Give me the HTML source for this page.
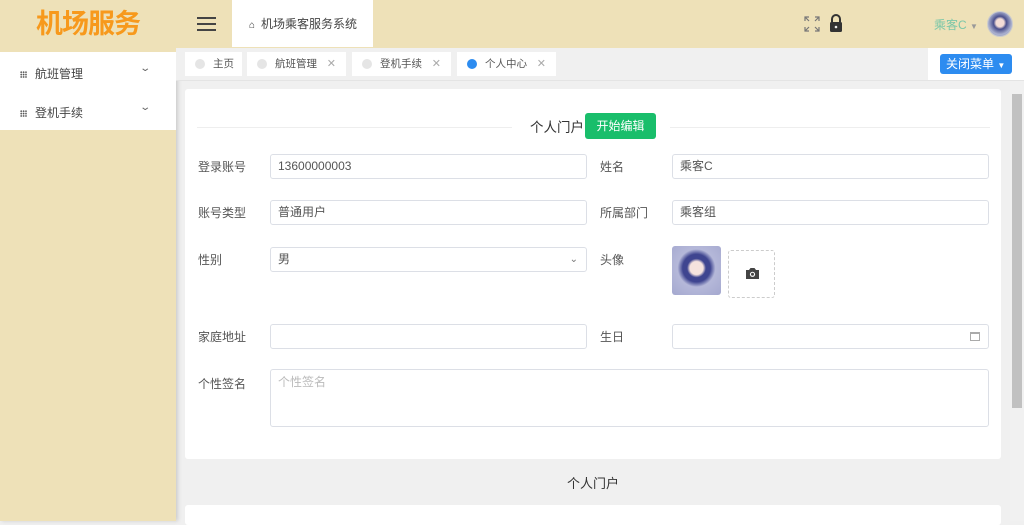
<!DOCTYPE html><html><head><meta charset="utf-8"><style>
*{box-sizing:border-box;margin:0;padding:0}
body{width:1024px;height:521px;overflow:hidden;background:#f0f0f0;font-family:"Liberation Sans","Noto Sans CJK SC",sans-serif;font-size:12px;color:#555;position:relative}
.a{position:absolute}
.side{left:0;top:0;width:176px;height:521px;background:#eee1b8;box-shadow:2px 0 4px rgba(0,0,0,.15)}
.logo{left:0;top:0;width:176px;height:50px;text-align:center;line-height:48px;font-size:27px;font-weight:bold;color:#f7991c;letter-spacing:-1px}
.menu{left:0;top:52px;width:176px;height:78px;background:#fff}
.mi{position:absolute;left:20px;font-size:12px;color:#444}
.grid{display:inline-block;width:7px;height:7px;background:radial-gradient(circle,#555 0.9px,transparent 1px) 0 0/2.4px 2.4px;margin-right:8px;vertical-align:0}
.chev{position:absolute;left:141px;font-size:10px;color:#666;transform:scaleX(1.4)}
.head{left:176px;top:0;width:848px;height:48px;background:#eee1b8}
.tabbar{left:176px;top:48px;width:848px;height:33px;background:#f0f0f0;border-bottom:1px solid #e4e4e4}
.tab{position:absolute;top:52px;height:24px;background:#fff;font-size:10.5px;color:#555;line-height:24px}
.dot{position:absolute;left:10px;top:7px;width:10px;height:10px;border-radius:50%;background:#e5e5e5}
.x{position:absolute;right:10px;color:#aaa;font-size:11px}
.inp{position:absolute;height:25px;border:1px solid #dcdfe6;border-radius:3px;background:#fff;padding-left:7px;line-height:23px;color:#555;font-size:12px}
.lb{position:absolute;font-size:12px;color:#555}
</style></head><body>
<div class="a side"></div>
<div class="a logo">机场服务</div>
<div class="a menu">
<div class="mi" style="top:13px"><span class="grid"></span>航班管理</div><div class="chev" style="top:11px">⌄</div>
<div class="mi" style="top:52px"><span class="grid"></span>登机手续</div><div class="chev" style="top:50px">⌄</div>
</div>
<div class="a head"></div>
<div class="a" style="left:197px;top:17px;width:19px;height:2px;background:#444;box-shadow:0 6px 0 #444,0 12px 0 #444"></div>
<div class="a" style="left:232px;top:0;width:141px;height:47px;background:#fff;font-size:12px;color:#444;line-height:48px;padding-left:17px"><span style="font-size:10px;color:#333;margin-right:6px">⌂</span>机场乘客服务系统</div>
<svg class="a" style="left:804px;top:16px" width="16" height="16" viewBox="0 0 16 16" fill="none" stroke="#777" stroke-width="1.2"><path d="M1 5V1h4M1 1l4 4M11 1h4v4M15 1l-4 4M1 11v4h4M1 15l4-4M15 11v4h-4M15 15l-4-4"/></svg>
<svg class="a" style="left:829px;top:14px" width="14" height="18" viewBox="0 0 14 18"><path d="M3 8V5a4 4 0 0 1 8 0v3" fill="none" stroke="#333" stroke-width="2"/><rect x="1" y="8" width="12" height="10" rx="1.5" fill="#333"/><circle cx="7" cy="13" r="1.3" fill="#eee"/></svg>
<div class="a" style="left:934px;top:16px;font-size:12px;color:#7cc7a8">乘客C <span style="font-size:8px;color:#999">▼</span></div>
<div class="a" style="left:987px;top:11px;width:26px;height:26px;border-radius:50%;background:radial-gradient(circle at 50% 45%,#f3dcd6 0 22%,#4a4f8c 36%,#aab0cf 65%,#8a90b8);border:1px solid #ccc"></div>
<div class="a tabbar"></div>
<div class="a tab" style="left:185px;width:57px"><span class="dot"></span><span style="position:absolute;left:28px">主页</span></div>
<div class="a tab" style="left:247px;width:99px"><span class="dot"></span><span style="position:absolute;left:28px">航班管理</span><span class="x">✕</span></div>
<div class="a tab" style="left:352px;width:99px"><span class="dot"></span><span style="position:absolute;left:28px">登机手续</span><span class="x">✕</span></div>
<div class="a tab" style="left:457px;width:99px"><span class="dot" style="background:#2d8cf0"></span><span style="position:absolute;left:28px">个人中心</span><span class="x">✕</span></div>
<div class="a" style="left:928px;top:48px;width:96px;height:32px;background:#fff"></div>
<div class="a" style="left:940px;top:54px;width:72px;height:20px;background:#2d8cf0;border-radius:3px;color:#fff;font-size:12px;line-height:20px;padding-left:6px">关闭菜单 <span style="font-size:8px">▼</span></div>
<div class="a" style="left:1010px;top:81px;width:14px;height:440px;background:#f1f1f1"></div>
<div class="a" style="left:1012px;top:94px;width:10px;height:314px;background:#c1c1c1"></div>
<div class="a" style="left:185px;top:89px;width:816px;height:370px;background:#fff;border-radius:3px"></div>
<div class="a" style="left:197px;top:127px;width:315px;height:1px;background:#eee"></div>
<div class="a" style="left:670px;top:127px;width:320px;height:1px;background:#eee"></div>
<div class="a" style="left:530px;top:116px;font-size:13.5px;color:#333">个人门户</div>
<div class="a" style="left:585px;top:113px;width:71px;height:26px;background:#19be6b;border-radius:3px;color:#fff;font-size:12px;line-height:26px;text-align:center">开始编辑</div>
<div class="lb" style="left:198px;top:158px">登录账号</div>
<div class="inp" style="left:270px;top:154px;width:317px">13600000003</div>
<div class="lb" style="left:600px;top:158px">姓名</div>
<div class="inp" style="left:672px;top:154px;width:317px">乘客C</div>
<div class="lb" style="left:198px;top:204px">账号类型</div>
<div class="inp" style="left:270px;top:200px;width:317px">普通用户</div>
<div class="lb" style="left:600px;top:204px">所属部门</div>
<div class="inp" style="left:672px;top:200px;width:317px">乘客组</div>
<div class="lb" style="left:198px;top:251px">性别</div>
<div class="inp" style="left:270px;top:247px;width:317px">男<span style="position:absolute;right:8px;font-size:10px;color:#777">⌄</span></div>
<div class="lb" style="left:600px;top:251px">头像</div>
<div class="a" style="left:672px;top:246px;width:49px;height:49px;border-radius:3px;background:radial-gradient(circle at 50% 45%,#f6e3de 0 18%,#3f4590 26% 38%,#b5b8d9 52%,#a4a8cf)"></div>
<div class="a" style="left:728px;top:250px;width:47px;height:48px;border:1px dashed #ccc;border-radius:3px"></div>
<svg class="a" style="left:745px;top:267px" width="15" height="13" viewBox="0 0 15 13"><path d="M1 3h3l1.5-2h4L11 3h3v9H1z" fill="#444"/><circle cx="7.5" cy="7.3" r="2.6" fill="#fff"/><circle cx="7.5" cy="7.3" r="1.5" fill="#444"/></svg>
<div class="lb" style="left:198px;top:328px">家庭地址</div>
<div class="inp" style="left:270px;top:324px;width:317px"></div>
<div class="lb" style="left:600px;top:328px">生日</div>
<div class="inp" style="left:672px;top:324px;width:317px"><span style="position:absolute;right:8px;top:7px;width:10px;height:9px;border:1px solid #aaa;border-top-width:2px"></span></div>
<div class="lb" style="left:198px;top:375px">个性签名</div>
<div class="inp" style="left:270px;top:369px;width:719px;height:58px;color:#bbb;padding-left:7px;line-height:20px;padding-top:2px">个性签名</div>
<div class="a" style="left:567px;top:473px;font-size:13px;color:#333">个人门户</div>
<div class="a" style="left:185px;top:505px;width:816px;height:20px;background:#fff;border-radius:3px"></div>
</body></html>
